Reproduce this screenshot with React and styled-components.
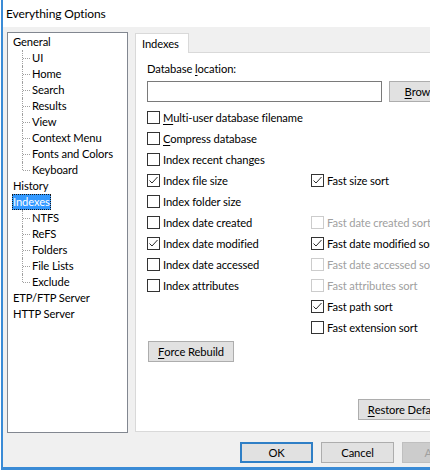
import styled, { createGlobalStyle } from "styled-components";

const FONT = `Lato, "Segoe UI", "Liberation Sans", sans-serif`;

const GlobalStyle = createGlobalStyle`
  html, body {
    margin: 0;
    padding: 0;
    background: #ffffff;
    overflow: hidden;
  }
  body {
    font-family: ${FONT};
    font-size: 11.2px;
    letter-spacing: -0.1px;
    color: #000000;
  }
`;

const treeData = [
  {
    label: "General",
    children: ["UI", "Home", "Search", "Results", "View", "Context Menu", "Fonts and Colors", "Keyboard"],
  },
  { label: "History" },
  {
    label: "Indexes",
    selected: true,
    children: ["NTFS", "ReFS", "Folders", "File Lists", "Exclude"],
  },
  { label: "ETP/FTP Server" },
  { label: "HTTP Server" },
];

// each row: [left option, right option]
const optionRows = [
  [{ text: "Multi-user database filename", key: "M" }, null],
  [{ text: "Compress database", key: "C" }, null],
  [{ text: "Index recent changes" }, null],
  [{ text: "Index file size", checked: true }, { text: "Fast size sort", checked: true }],
  [{ text: "Index folder size" }, null],
  [{ text: "Index date created" }, { text: "Fast date created sort", disabled: true }],
  [{ text: "Index date modified", checked: true }, { text: "Fast date modified sort", checked: true }],
  [{ text: "Index date accessed" }, { text: "Fast date accessed sort", disabled: true }],
  [{ text: "Index attributes" }, { text: "Fast attributes sort", disabled: true }],
  [null, { text: "Fast path sort", checked: true }],
  [null, { text: "Fast extension sort" }],
];

const Mnemonic = ({ text, k }) => {
  if (!k) return text;
  const i = text.indexOf(k);
  return (
    <>
      {text.slice(0, i)}
      <Key>{text[i]}</Key>
      {text.slice(i + 1)}
    </>
  );
};

const CheckOption = ({ text, checked, disabled, k }) => (
  <OptionRow $disabled={disabled}>
    <Box $disabled={disabled}>
      {checked && (
        <svg width="11" height="11" viewBox="0 0 11 11">
          <path d="M1.5 5.5 L4 8 L9.5 2" fill="none" stroke="#2b2b2b" strokeWidth="1" />
        </svg>
      )}
    </Box>
    <span>
      <Mnemonic text={text} k={k} />
    </span>
  </OptionRow>
);

const App = () => {
  return (
    <>
      <GlobalStyle />
      <Window>
        <TitleBar>Everything Options</TitleBar>
        <Main>
          <Tree>
            {treeData.map((node) => (
              <div key={node.label}>
                <TreeRow>
                  <TreeLabel $selected={node.selected}>{node.label}</TreeLabel>
                </TreeRow>
                {node.children &&
                  node.children.map((child, i) => (
                    <ChildRow key={child} $last={i === node.children.length - 1}>
                      <TreeLabel>{child}</TreeLabel>
                    </ChildRow>
                  ))}
              </div>
            ))}
          </Tree>

          <TabArea>
            <TabStrip>
              <Tab>Indexes</Tab>
            </TabStrip>
            <Panel>
              <FieldLabel>
                Database <Key>l</Key>ocation:
              </FieldLabel>
              <PathRow>
                <PathInput />
                <Button $width={75}>
                  <Key>B</Key>rowse...
                </Button>
              </PathRow>
              <OptionsGrid>
                {optionRows.map(([left, right], r) => [
                  left ? (
                    <CheckOption key={`l${r}`} {...left} k={left.key} />
                  ) : (
                    <span key={`l${r}`} />
                  ),
                  right ? (
                    <CheckOption key={`r${r}`} {...right} k={right.key} />
                  ) : (
                    <span key={`r${r}`} />
                  ),
                ])}
              </OptionsGrid>
              <RebuildButton $width={86}>
                <Key>F</Key>orce Rebuild
              </RebuildButton>
              <PanelFooter>
                <Button $width={100}>
                  <Key>R</Key>estore Defaults
                </Button>
              </PanelFooter>
            </Panel>
          </TabArea>
        </Main>
        <Footer>
          <Button $width={73} $default>
            OK
          </Button>
          <Button $width={73}>Cancel</Button>
          <Button $width={73} $disabled>
            Apply
          </Button>
        </Footer>
      </Window>
    </>
  );
};

export default App;

const Window = styled.div`
  width: 480px;
  height: 467px;
  margin-left: 1px;
  border-left: 2px solid #3a8bd6;
  border-bottom: 3px solid #3a8bd6;
  background: #f0f0f0;
  display: flex;
  flex-direction: column;
  overflow: hidden;
`;

const TitleBar = styled.div`
  height: 27px;
  flex: none;
  background: #ffffff;
  padding-left: 3px;
  display: flex;
  align-items: center;
  font-size: 12px;
  color: #000000;
`;

const Main = styled.div`
  display: flex;
  gap: 7px;
  padding: 5px 0 0 4px;
`;

const Tree = styled.div`
  width: 121px;
  height: 401px;
  flex: none;
  box-sizing: border-box;
  border: 1px solid #828790;
  background: #ffffff;
  padding: 1px 0 0 4px;
`;

const TreeRow = styled.div`
  height: 16px;
  display: flex;
  align-items: center;
`;

const TreeLabel = styled.span`
  height: 16px;
  line-height: 16px;
  padding: 0 1px;
  box-sizing: border-box;
  white-space: nowrap;
  ${(p) =>
    p.$selected && {
      background: "#3399ff",
      color: "#ffffff",
      outline: "1px dotted #1a1a1a",
      outlineOffset: "-1px",
    }}
`;

const ChildRow = styled.div`
  position: relative;
  height: 16px;
  display: flex;
  align-items: center;
  padding-left: 19px;

  &::before {
    content: "";
    position: absolute;
    left: 10px;
    top: 0;
    height: ${(p) => (p.$last ? "8px" : "16px")};
    border-left: 1px dotted #a0a0a0;
  }

  &::after {
    content: "";
    position: absolute;
    left: 11px;
    top: 8px;
    width: 7px;
    border-top: 1px dotted #a0a0a0;
  }
`;

const TabArea = styled.div`
  width: 335px;
  flex: none;
  display: flex;
  flex-direction: column;
`;

const TabStrip = styled.div`
  height: 20px;
  display: flex;
  align-items: flex-end;
`;

const Tab = styled.div`
  width: 54px;
  height: 20px;
  box-sizing: border-box;
  padding: 0 6px;
  border: 1px solid #d9d9d9;
  border-bottom: none;
  background: #ffffff;
  display: flex;
  align-items: center;
  margin-bottom: -1px;
  position: relative;
`;

const Panel = styled.div`
  height: 380px;
  box-sizing: border-box;
  border: 1px solid #d9d9d9;
  background: #ffffff;
  padding: 8px 11px 11px 11px;
  display: flex;
  flex-direction: column;
`;

const FieldLabel = styled.div`
  height: 16px;
  line-height: 16px;
`;

const PathRow = styled.div`
  display: flex;
  gap: 7px;
  margin-top: 4px;
`;

const PathInput = styled.div`
  width: 235px;
  height: 21px;
  box-sizing: border-box;
  border: 1px solid #7a7a7a;
  background: #ffffff;
  flex: none;
`;

const OptionsGrid = styled.div`
  display: grid;
  grid-template-columns: 164px 1fr;
  grid-auto-rows: 21px;
  align-items: center;
  margin-top: 5px;
`;

const OptionRow = styled.div`
  display: flex;
  align-items: center;
  gap: 3px;
  white-space: nowrap;
  color: ${(p) => (p.$disabled ? "#a0a0a0" : "#000000")};
`;

const Box = styled.div`
  width: 13px;
  height: 13px;
  box-sizing: border-box;
  border: 1px solid ${(p) => (p.$disabled ? "#cccccc" : "#333333")};
  background: #ffffff;
  flex: none;
  display: flex;
  align-items: center;
  justify-content: center;
`;

const Key = styled.span`
  text-decoration: underline;
  text-underline-offset: 2px;
`;

const Button = styled.div`
  width: ${(p) => p.$width}px;
  height: 21px;
  flex: none;
  box-sizing: border-box;
  border: 1px solid #adadad;
  background: #e1e1e1;
  display: flex;
  align-items: center;
  justify-content: center;
  white-space: nowrap;
  ${(p) =>
    p.$default && {
      border: "2px solid #2f7fc6",
    }}
  ${(p) =>
    p.$disabled && {
      border: "1px solid #bfbfbf",
      background: "#cccccc",
      color: "#a0a0a0",
    }}
`;

const RebuildButton = styled(Button)`
  margin-top: 3px;
  margin-left: 1px;
`;

const PanelFooter = styled.div`
  margin-top: auto;
  display: flex;
  justify-content: flex-end;
`;

const Footer = styled.div`
  display: flex;
  justify-content: flex-end;
  gap: 8px;
  padding: 9px 8px 0 0;
`;
